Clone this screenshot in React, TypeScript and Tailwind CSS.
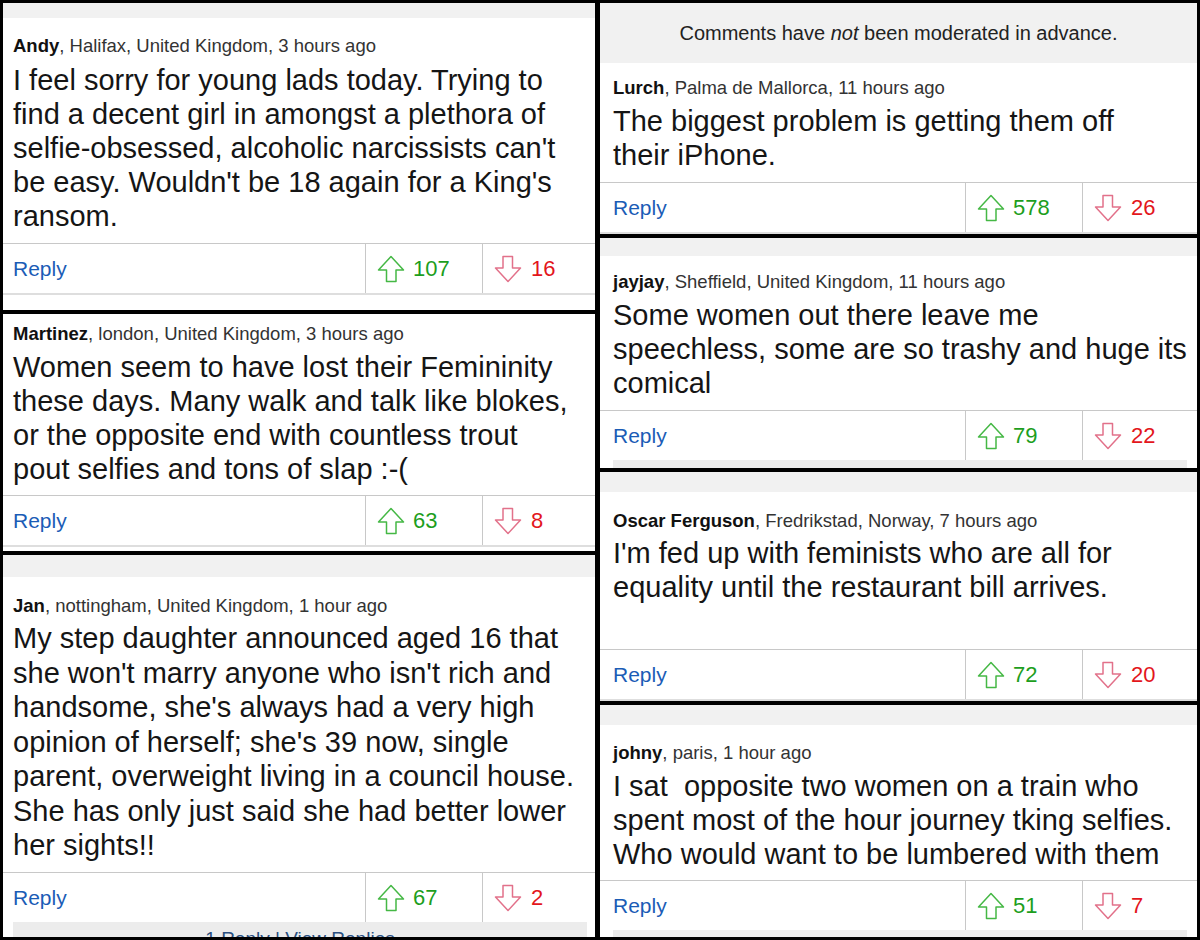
import React from "react";

type Comment = {
  name: string;
  meta: string;
  lines: string[];
  up: number;
  down: number;
  strip: string; // gray strip above the comment
  pt: string; // space above header
  gap: string; // space between header and body
  lh: string; // body line height
  pb: string; // space below body
  end: "border" | "bar";
  after: string; // white gap or gray bar height
  barText?: string;
};

const left: Comment[] = [
  {
    name: "Andy",
    meta: "Halifax, United Kingdom, 3 hours ago",
    lines: [
      "I feel sorry for young lads today. Trying to",
      "find a decent girl in amongst a plethora of",
      "selfie-obsessed, alcoholic narcissists can't",
      "be easy. Wouldn't be 18 again for a King's",
      "ransom.",
    ],
    up: 107,
    down: 16,
    strip: "h-[15px]",
    pt: "pt-[16px]",
    gap: "mt-[5px]",
    lh: "leading-[34px]",
    pb: "pb-[10px]",
    end: "border",
    after: "h-[15px]",
  },
  {
    name: "Martinez",
    meta: "london, United Kingdom, 3 hours ago",
    lines: [
      "Women seem to have lost their Femininity",
      "these days. Many walk and talk like blokes,",
      "or the opposite end with countless trout",
      "pout selfies and tons of slap :-(",
    ],
    up: 63,
    down: 8,
    strip: "h-0",
    pt: "pt-[8px]",
    gap: "mt-[4px]",
    lh: "leading-[34px]",
    pb: "pb-[9px]",
    end: "border",
    after: "h-[4px]",
  },
  {
    name: "Jan",
    meta: "nottingham, United Kingdom, 1 hour ago",
    lines: [
      "My step daughter announced aged 16 that",
      "she won't marry anyone who isn't rich and",
      "handsome, she's always had a very high",
      "opinion of herself; she's 39 now, single",
      "parent, overweight living in a council house.",
      "She has only just said she had better lower",
      "her sights!!",
    ],
    up: 67,
    down: 2,
    strip: "h-[22px]",
    pt: "pt-[17px]",
    gap: "mt-[3px]",
    lh: "leading-[34.5px]",
    pb: "pb-[9.5px]",
    end: "bar",
    after: "h-[15px]",
    barText: "1 Reply | View Replies",
  },
];

const right: Comment[] = [
  {
    name: "Lurch",
    meta: "Palma de Mallorca, 11 hours ago",
    lines: ["The biggest problem is getting them off", "their iPhone."],
    up: 578,
    down: 26,
    strip: "notice",
    pt: "pt-[13px]",
    gap: "mt-[4px]",
    lh: "leading-[34px]",
    pb: "pb-[10px]",
    end: "border",
    after: "h-0",
  },
  {
    name: "jayjay",
    meta: "Sheffield, United Kingdom, 11 hours ago",
    lines: [
      "Some women out there leave me",
      "speechless, some are so trashy and huge its",
      "comical",
    ],
    up: 79,
    down: 22,
    strip: "h-[18px]",
    pt: "pt-[14px]",
    gap: "mt-[4px]",
    lh: "leading-[34px]",
    pb: "pb-[10px]",
    end: "bar",
    after: "h-[8px]",
  },
  {
    name: "Oscar Ferguson",
    meta: "Fredrikstad, Norway, 7 hours ago",
    lines: [
      "I'm fed up with feminists who are all for",
      "equality until the restaurant bill arrives.",
    ],
    up: 72,
    down: 20,
    strip: "h-[20px]",
    pt: "pt-[17px]",
    gap: "mt-[3px]",
    lh: "leading-[34px]",
    pb: "pb-[45px]",
    end: "border",
    after: "h-0",
  },
  {
    name: "johny",
    meta: "paris, 1 hour ago",
    lines: [
      "I sat  opposite two women on a train who",
      "spent most of the hour journey tking selfies.",
      "Who would want to be lumbered with them",
    ],
    up: 51,
    down: 7,
    strip: "h-[20px]",
    pt: "pt-[16px]",
    gap: "mt-[4px]",
    lh: "leading-[34px]",
    pb: "pb-[9px]",
    end: "bar",
    after: "h-[7px]",
  },
];

function Arrow({ up }: { up: boolean }) {
  return (
    <svg
      width="28"
      height="28"
      viewBox="0 0 28 28"
      fill="none"
      stroke={up ? "#45b845" : "#e2718a"}
      strokeWidth="1.5"
      strokeLinejoin="round"
      className={up ? "shrink-0" : "shrink-0 rotate-180"}
    >
      <path d="M14 1.5 26.5 15H19v11.5H9.5V15H1.5Z" />
    </svg>
  );
}

function CommentCard({ c, side }: { c: Comment; side: "l" | "r" }) {
  const pad = side === "l" ? "pl-[10px]" : "pl-[13px]";
  const cols =
    side === "l" ? "grid-cols-[362px_117px_1fr]" : "grid-cols-[365px_117px_1fr]";
  const barInset = side === "l" ? "ml-[10px] mr-[8px]" : "ml-[13px] mr-[10px]";

  return (
    <div className="bg-white flex flex-col">
      {c.strip === "notice" ? (
        <div className="h-[60px] bg-[#f1f1f1] flex items-center justify-center text-[20px] text-[#222]">
          Comments have&nbsp;<em>not</em>&nbsp;been moderated in advance.
        </div>
      ) : (
        <div className={`${c.strip} bg-[#f1f1f1]`} />
      )}

      <div className={`${pad} ${c.pt} ${c.pb}`}>
        <div className="text-[18.5px] leading-[24px] text-[#333] whitespace-nowrap">
          <span className="font-bold text-[#111]">{c.name}</span>, {c.meta}
        </div>
        <div className={`${c.gap} text-[29px] ${c.lh} text-[#151515]`}>
          {c.lines.map((l, i) => (
            <div key={i} className="whitespace-pre">
              {l}
            </div>
          ))}
        </div>
      </div>

      <div
        className={`grid ${cols} border-t border-[#c8c8c8] ${
          c.end === "border" ? "border-b-2 border-b-[#dedede]" : ""
        }`}
      >
        <div className={`h-[49px] flex items-center ${pad} text-[21px] text-[#1b5cb6]`}>
          Reply
        </div>
        <div className="h-[49px] flex items-center gap-[8px] pl-[11px] border-l border-[#c8c8c8] text-[22px] text-[#1d9e1d]">
          <Arrow up />
          <span>{c.up}</span>
        </div>
        <div className="h-[49px] flex items-center gap-[9px] pl-[11px] border-l border-[#c8c8c8] text-[22px] text-[#e3161c]">
          <Arrow up={false} />
          <span>{c.down}</span>
        </div>
      </div>

      {c.end === "bar" ? (
        <div
          className={`${c.after} ${barInset} bg-[#ececec] overflow-hidden text-center text-[19px] leading-[19px] text-[#2a4f80] pt-[7px]`}
        >
          {c.barText}
        </div>
      ) : (
        <div className={c.after} />
      )}
    </div>
  );
}

export default function App() {
  return (
    <div className="w-[1200px] h-[940px] overflow-hidden bg-black flex gap-[5px] p-[3px] font-['Liberation_Sans',Arial,sans-serif]">
      <div className="w-[592px] flex flex-col gap-[4px]">
        {left.map((c) => (
          <CommentCard key={c.name} c={c} side="l" />
        ))}
      </div>
      <div className="w-[597px] flex flex-col gap-[4px]">
        {right.map((c) => (
          <CommentCard key={c.name} c={c} side="r" />
        ))}
      </div>
    </div>
  );
}
